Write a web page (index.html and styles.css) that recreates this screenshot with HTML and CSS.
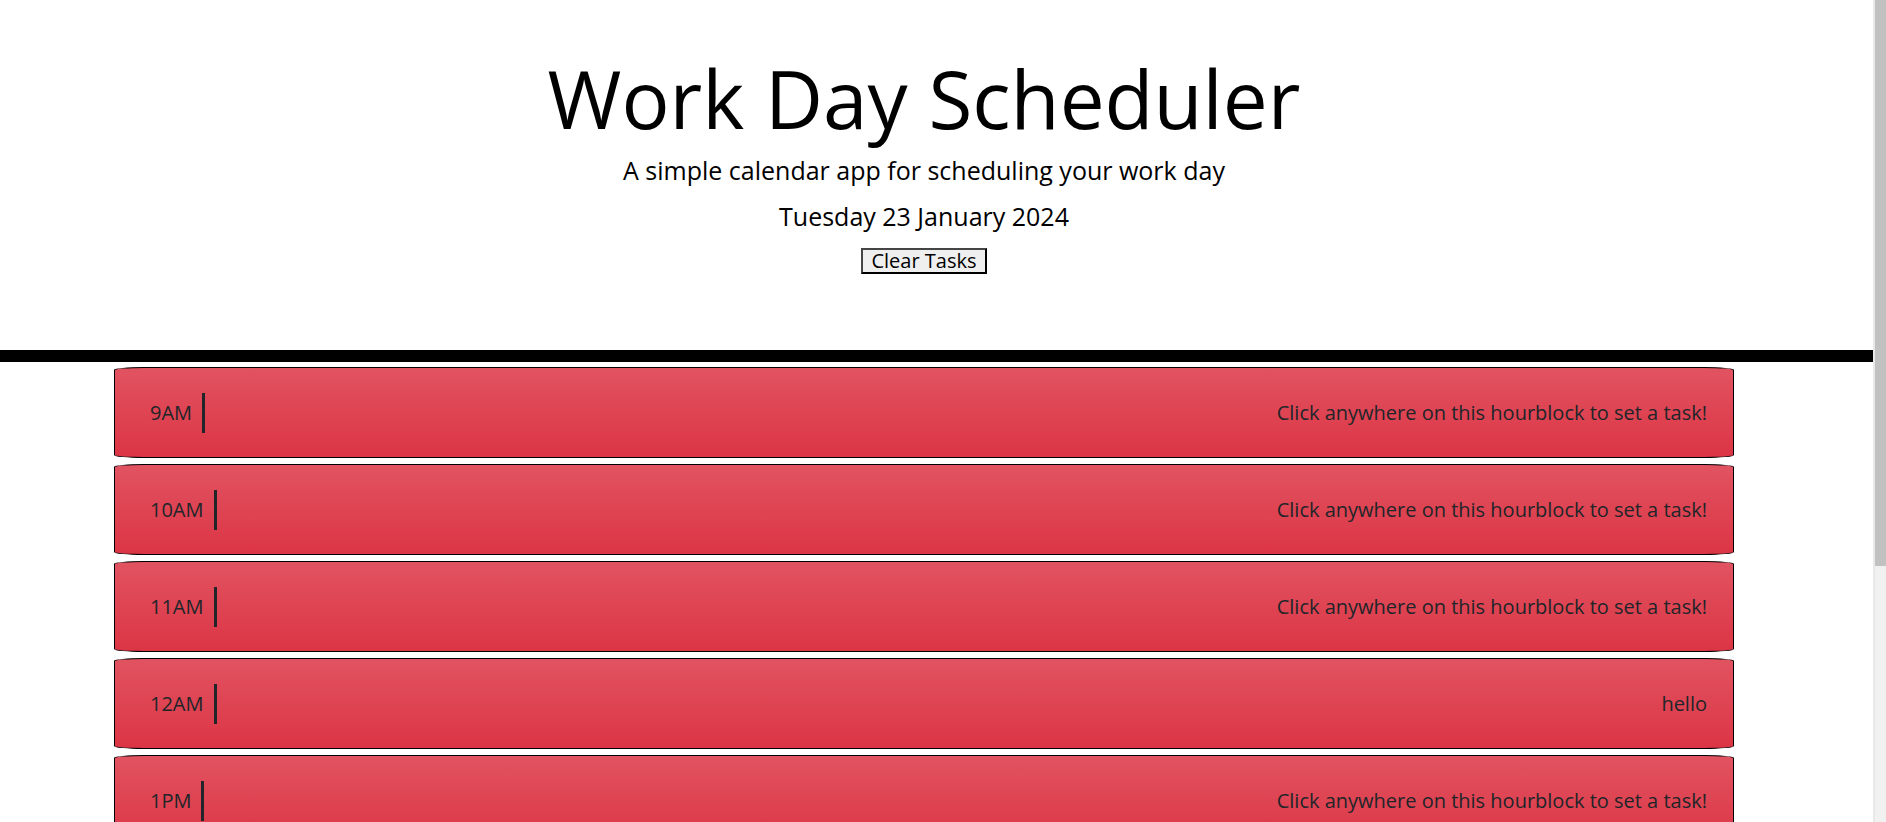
FILE: index.html
```html
<!DOCTYPE html>
<html lang="en">
<head>
<meta charset="utf-8">
<title>Work Day Scheduler</title>
<link rel="stylesheet" href="styles.css">
</head>
<body>
<div class="page">
  <header class="jumbotron">
    <h1 class="title">Work Day Scheduler</h1>
    <p class="lead">A simple calendar app for scheduling your work day</p>
    <p class="current-day">Tuesday 23 January 2024</p>
    <button class="clear-btn" type="button">Clear Tasks</button>
  </header>
  <main class="container">
    <div class="time-block"><div class="hour">9AM</div><div class="description">Click anywhere on this hourblock to set a task!</div></div>
    <div class="time-block"><div class="hour">10AM</div><div class="description">Click anywhere on this hourblock to set a task!</div></div>
    <div class="time-block"><div class="hour">11AM</div><div class="description">Click anywhere on this hourblock to set a task!</div></div>
    <div class="time-block"><div class="hour">12AM</div><div class="description">hello</div></div>
    <div class="time-block"><div class="hour">1PM</div><div class="description">Click anywhere on this hourblock to set a task!</div></div>
    <div class="time-block"><div class="hour">2PM</div><div class="description">Click anywhere on this hourblock to set a task!</div></div>
    <div class="time-block"><div class="hour">3PM</div><div class="description">Click anywhere on this hourblock to set a task!</div></div>
    <div class="time-block"><div class="hour">4PM</div><div class="description">Click anywhere on this hourblock to set a task!</div></div>
    <div class="time-block"><div class="hour">5PM</div><div class="description">Click anywhere on this hourblock to set a task!</div></div>
  </main>
</div>
<div class="scrollbar" aria-hidden="true"><div class="scrollbar-thumb"></div></div>
</body>
</html>
```
FILE: styles.css
```css
html, body {
  margin: 0;
  padding: 0;
  background: #ffffff;
}

body {
  display: flex;
  height: 100vh;
  overflow: hidden;
  font-family: "Open Sans", "Liberation Sans", sans-serif;
  font-size: 20px;
  color: #212529;
}

.page {
  flex: 1;
  min-width: 0;
  overflow: hidden;
}

.scrollbar {
  width: 11px;
  flex: none;
  background: #f1f1f1;
  border-left: 2px solid #e9e9e9;
}

.scrollbar-thumb {
  height: 566px;
  background: #c1c1c1;
}

.jumbotron {
  text-align: center;
  color: #000000;
  padding: 50px 25px 76px 0;
  border-bottom: 12px solid #000000;
}

.title {
  margin: 0;
  font-size: 80px;
  font-weight: 400;
  line-height: 96px;
}

.lead {
  margin: 6px 0 0;
  font-size: 25px;
  line-height: 36px;
  font-weight: 400;
}

.current-day {
  margin: 10px 0 0;
  font-size: 25px;
  line-height: 36px;
  font-weight: 400;
}

.clear-btn {
  margin-top: 14px;
  font-family: "Open Sans", "Liberation Sans", sans-serif;
  font-size: 20px;
  line-height: 22px;
  color: #000000;
  background: #efefef;
  border-style: solid;
  border-width: 2px;
  border-color: #454545 #000000 #000000 #454545;
  border-radius: 0;
  padding: 0 8px;
}

.container {
  width: 1620px;
  margin: 5px 0 0 114px;
}

.time-block {
  display: flex;
  align-items: center;
  justify-content: space-between;
  height: 91px;
  box-sizing: border-box;
  margin-bottom: 6px;
  border: 1px solid #000000;
  border-radius: 30px / 3px;
  background-color: #dc3545;
  background-image: linear-gradient(180deg, rgba(255, 255, 255, 0.15), rgba(255, 255, 255, 0));
  color: #212529;
}

.hour {
  margin-left: 35px;
  padding-right: 10px;
  height: 40px;
  line-height: 40px;
  border-right: 3px solid #212529;
}

.description {
  padding-right: 26px;
  text-align: right;
}
```
